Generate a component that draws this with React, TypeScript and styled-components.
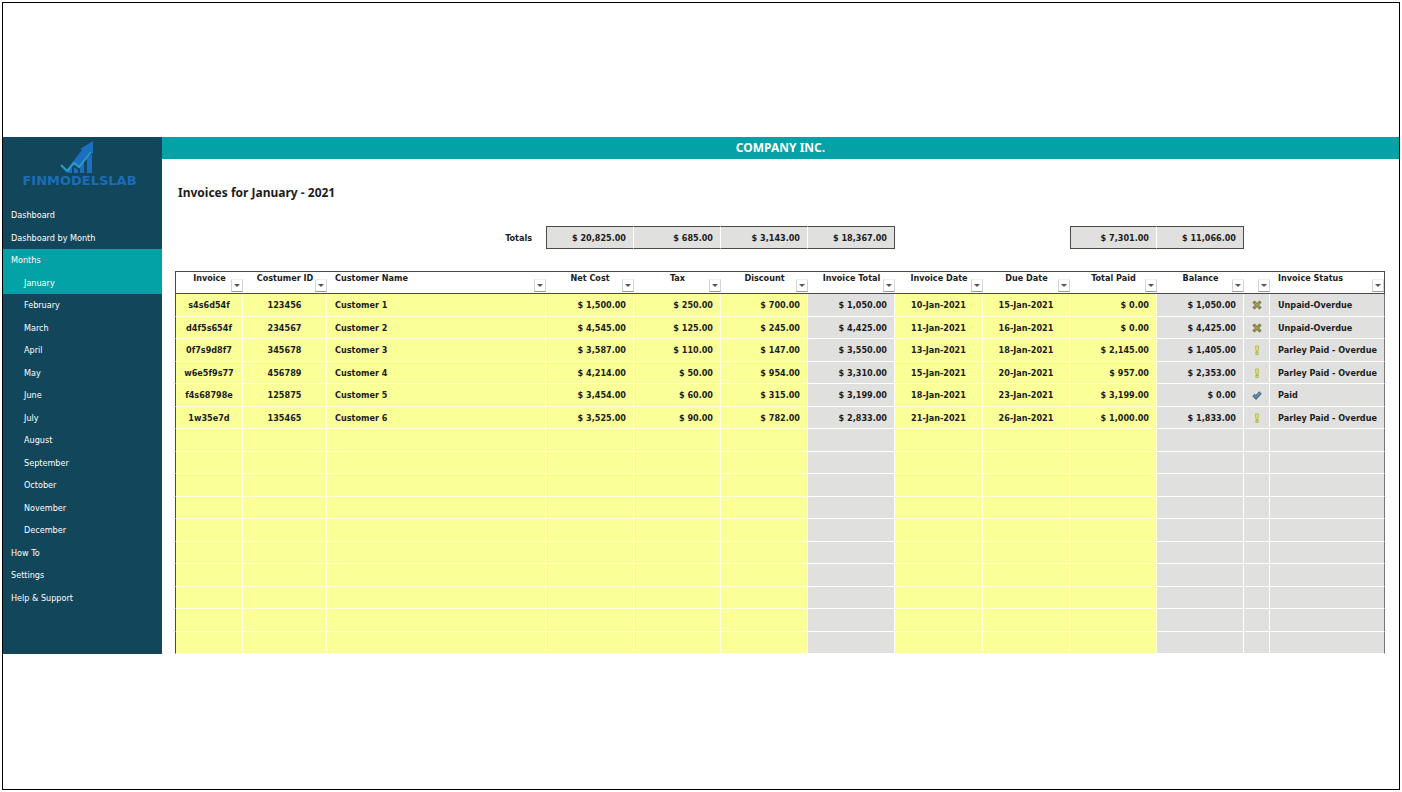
import React from "react";
import styled, { createGlobalStyle, css } from "styled-components";

const teal = "#02a2a6";
const navy = "#12465a";
const yellow = "#faff98";
const grey = "#e0e0df";
const line = "#4a4a4a";
const headingFont = `"Noto Sans", "Open Sans", sans-serif`;

const GlobalStyle = createGlobalStyle`
  *, *::before, *::after { box-sizing: border-box; }
  body {
    margin: 0;
    background: #fff;
    color: #1c1c1c;
    font-family: "DejaVu Sans Condensed", "DejaVu Sans", sans-serif;
    font-size: 9px;
    line-height: 12px;
  }
`;

const Page = styled.div`
  min-height: 100vh;
  padding: 2px;
  display: flex;
`;

const Frame = styled.div`
  flex: 1;
  min-width: 0;
  border: 1px solid #000;
  display: flex;
  align-items: center;
`;

const Workbook = styled.div`
  flex: 1;
  min-width: 0;
  padding-bottom: 1px;
  display: flex;
  align-items: stretch;
`;

const Sidebar = styled.aside`
  flex: none;
  width: 159px;
  padding-bottom: 45px;
  background: ${navy};
  color: #fff;
`;

const Brand = styled.div`
  height: 67px;
  padding: 4px 6px 0 0;
  display: flex;
  flex-direction: column;
  align-items: center;
  color: #1b6db9;
`;

const BrandMark = styled.svg`
  display: block;
  width: 40px;
  height: 32px;
`;

const BrandName = styled.span`
  font-family: "DejaVu Sans", sans-serif;
  font-size: 13px;
  line-height: 16px;
  font-weight: 700;
`;

const NavList = styled.ul`
  margin: 0;
  padding: 0;
  list-style: none;
`;

const NavItem = styled.li<{ $active?: boolean }>`
  height: 22px;
  background: ${(p) => (p.$active ? teal : "transparent")};
  &:nth-child(even) { height: 23px; }
`;

const NavLink = styled.a<{ $nested?: boolean }>`
  height: 100%;
  display: flex;
  align-items: center;
  padding-left: ${(p) => (p.$nested ? 21 : 8)}px;
  color: inherit;
  text-decoration: none;
`;

const Main = styled.main`
  flex: 1;
  min-width: 0;
`;

const CompanyBar = styled.header`
  height: 22px;
  display: flex;
  align-items: center;
  justify-content: center;
  background: ${teal};
  color: #fff;
  font-family: ${headingFont};
  font-size: 12px;
  font-weight: 700;
`;

const Content = styled.div`
  padding: 26px 14px 0 13px;
`;

const Title = styled.h1`
  margin: 0 0 25px;
  padding-left: 3px;
  font-family: ${headingFont};
  font-size: 12px;
  line-height: 16px;
  font-weight: 700;
`;

const Grid = styled.table`
  width: 100%;
  table-layout: fixed;
  border-collapse: separate;
  border-spacing: 0;
  font-weight: 700;
`;

const TotalsGrid = styled(Grid)`
  margin-bottom: 22px;
`;

const TotalsLabel = styled.th`
  height: 23px;
  padding: 0 14px 0 0;
  text-align: right;
`;

const Total = styled.td<{ $first?: boolean; $last?: boolean }>`
  height: 23px;
  padding: 0 7px 0 0;
  text-align: right;
  background: ${grey};
  border-top: 1px solid ${line};
  border-bottom: 1px solid ${line};
  border-right: 1px solid ${(p) => (p.$last ? line : "#fff")};
  ${(p) => p.$first && css`border-left: 1px solid ${line};`}
`;

const Blank = styled.td`
  padding: 0;
`;

type Align = "left" | "center" | "right";

const Head = styled.th<{ $align: Align }>`
  position: relative;
  height: 23px;
  padding: 0 ${(p) => (p.$align === "left" ? 8 : 0)}px;
  vertical-align: top;
  text-align: ${(p) => p.$align};
  white-space: nowrap;
  border-top: 1px solid ${line};
  border-bottom: 1px solid ${line};
  &:first-child { border-left: 1px solid ${line}; }
  &:last-child { border-right: 1px solid ${line}; }
`;

const FilterButton = styled.button`
  position: absolute;
  right: 0;
  bottom: 1px;
  width: 12px;
  height: 13px;
  padding: 0;
  display: flex;
  align-items: center;
  justify-content: center;
  background: #fff;
  border: 1px solid #d4d4d8;
  border-top-color: #f0f0f0;
  border-bottom-color: #9a9aa4;
  &::after {
    content: "";
    border: 3px solid transparent;
    border-top-color: #555;
    border-bottom-width: 0;
  }
`;

const Row = styled.tr`
  height: 22px;
  &:nth-child(odd) { height: 23px; }
`;

const Cell = styled.td<{ $align: Align; $locked?: boolean }>`
  padding: 0 ${(p) => (p.$align === "center" ? 0 : p.$align === "left" ? 8 : 7)}px;
  text-align: ${(p) => p.$align};
  white-space: nowrap;
  background: ${(p) => (p.$locked ? grey : yellow)};
  border-right: 1px solid ${(p) => (p.$locked ? "#fff" : "#fdffdc")};
  border-bottom: 1px solid ${(p) => (p.$locked ? "#fff" : "#fdffdc")};
  &:first-child { border-left: 1px solid ${line}; }
  &:last-child { border-right: 1px solid #777; }
`;

const StatusIcon = styled.svg`
  display: block;
  margin: 0 auto;
  width: 10px;
  height: 10px;
`;

type Column = { label: string; width?: number; head: Align; body: Align; locked?: boolean };

const columns: Column[] = [
  { label: "Invoice", width: 68, head: "center", body: "center" },
  { label: "Costumer ID", width: 84, head: "center", body: "center" },
  { label: "Customer Name", head: "left", body: "left" },
  { label: "Net Cost", width: 88, head: "center", body: "right" },
  { label: "Tax", width: 87, head: "center", body: "right" },
  { label: "Discount", width: 87, head: "center", body: "right" },
  { label: "Invoice Total", width: 87, head: "center", body: "right", locked: true },
  { label: "Invoice Date", width: 88, head: "center", body: "center" },
  { label: "Due Date", width: 87, head: "center", body: "center" },
  { label: "Total Paid", width: 87, head: "center", body: "right" },
  { label: "Balance", width: 87, head: "center", body: "right", locked: true },
  { label: "", width: 26, head: "center", body: "center", locked: true },
  { label: "Invoice Status", width: 115, head: "left", body: "left", locked: true },
];

type Mark = "cross" | "bang" | "check";

const invoices: { cells: string[]; mark: Mark; status: string }[] = [
  { cells: ["s4s6d54f", "123456", "Customer 1", "$ 1,500.00", "$ 250.00", "$ 700.00", "$ 1,050.00", "10-Jan-2021", "15-Jan-2021", "$ 0.00", "$ 1,050.00"], mark: "cross", status: "Unpaid-Overdue" },
  { cells: ["d4f5s654f", "234567", "Customer 2", "$ 4,545.00", "$ 125.00", "$ 245.00", "$ 4,425.00", "11-Jan-2021", "16-Jan-2021", "$ 0.00", "$ 4,425.00"], mark: "cross", status: "Unpaid-Overdue" },
  { cells: ["0f7s9d8f7", "345678", "Customer 3", "$ 3,587.00", "$ 110.00", "$ 147.00", "$ 3,550.00", "13-Jan-2021", "18-Jan-2021", "$ 2,145.00", "$ 1,405.00"], mark: "bang", status: "Parley Paid - Overdue" },
  { cells: ["w6e5f9s77", "456789", "Customer 4", "$ 4,214.00", "$ 50.00", "$ 954.00", "$ 3,310.00", "15-Jan-2021", "20-Jan-2021", "$ 957.00", "$ 2,353.00"], mark: "bang", status: "Parley Paid - Overdue" },
  { cells: ["f4s68798e", "125875", "Customer 5", "$ 3,454.00", "$ 60.00", "$ 315.00", "$ 3,199.00", "18-Jan-2021", "23-Jan-2021", "$ 3,199.00", "$ 0.00"], mark: "check", status: "Paid" },
  { cells: ["1w35e7d", "135465", "Customer 6", "$ 3,525.00", "$ 90.00", "$ 782.00", "$ 2,833.00", "21-Jan-2021", "26-Jan-2021", "$ 1,000.00", "$ 1,833.00"], mark: "bang", status: "Parley Paid - Overdue" },
];

const emptyRows = Array.from({ length: 10 }, (_, i) => i);

const months = ["January", "February", "March", "April", "May", "June", "July", "August", "September", "October", "November", "December"];

const navigation = [
  { label: "Dashboard" },
  { label: "Dashboard by Month" },
  { label: "Months", active: true },
  ...months.map((label) => ({ label, nested: true, active: label === "January" })),
  { label: "How To" },
  { label: "Settings" },
  { label: "Help & Support" },
] as { label: string; nested?: boolean; active?: boolean }[];

function Columns() {
  return (
    <colgroup>
      {columns.map((c, i) => (
        <col key={i} width={c.width} />
      ))}
    </colgroup>
  );
}

function Logo() {
  return (
    <BrandMark viewBox="0 0 40 32" aria-hidden="true">
      <g fill="#1b6fbe">
        <path d="M8 29l4-3v6H8zM14 26l4 3v3h-4zM20 24l4-4v12h-4zM27 17l5-4v19h-5z" />
        <path d="M8 27 22 9l-2-1L33 0v13l-3-2-11 14-5-4z" />
      </g>
      <path d="m1 24 6 6 7-8 5 4 12-15" fill="none" stroke="#2d9bd2" strokeWidth="2" />
    </BrandMark>
  );
}

function StatusMark({ mark }: { mark: Mark }) {
  if (mark === "cross") {
    return (
      <StatusIcon viewBox="0 0 10 10" role="img" aria-label="Unpaid">
        <path d="M2.500 2.500l5 5M7.500 2.500l-5 5" stroke="#77743a" strokeWidth="3" strokeLinecap="square" />
        <path d="M2.500 2.500l5 5M7.500 2.500l-5 5" stroke="#a3a062" strokeWidth="1.400" />
      </StatusIcon>
    );
  }
  if (mark === "bang") {
    return (
      <StatusIcon viewBox="0 0 10 10" role="img" aria-label="Partly paid">
        <path d="M3.500 1h3L6 6.400H4z" fill="#e4e86a" stroke="#a9ab55" strokeWidth=".8" />
        <rect x="3.900" y="7.400" width="2.200" height="2" fill="#e4e86a" stroke="#a9ab55" strokeWidth=".8" />
      </StatusIcon>
    );
  }
  return (
    <StatusIcon viewBox="0 0 10 10" role="img" aria-label="Paid">
      <path d="M1.500 5 4 7.500l4.500-5" fill="none" stroke="#4a6f88" strokeWidth="3.400" />
      <path d="M1.800 5.200 4 7.300l4-4.500" fill="none" stroke="#7ba6bd" strokeWidth="1" />
    </StatusIcon>
  );
}

export default function App() {
  return (
    <>
      <GlobalStyle />
      <Page>
        <Frame>
          <Workbook>
            <Sidebar>
              <Brand>
                <Logo />
                <BrandName>FINMODELSLAB</BrandName>
              </Brand>
              <nav aria-label="Sheets">
                <NavList>
                  {navigation.map((item) => (
                    <NavItem key={item.label} $active={item.active}>
                      <NavLink href="#" $nested={item.nested}>{item.label}</NavLink>
                    </NavItem>
                  ))}
                </NavList>
              </nav>
            </Sidebar>
            <Main>
              <CompanyBar>COMPANY INC.</CompanyBar>
              <Content>
                <Title>Invoices for January - 2021</Title>
                <TotalsGrid>
                  <Columns />
                  <tbody>
                    <tr>
                      <TotalsLabel colSpan={3} scope="row">Totals</TotalsLabel>
                      <Total $first>$ 20,825.00</Total>
                      <Total>$ 685.00</Total>
                      <Total>$ 3,143.00</Total>
                      <Total $last>$ 18,367.00</Total>
                      <Blank colSpan={2} />
                      <Total $first>$ 7,301.00</Total>
                      <Total $last>$ 11,066.00</Total>
                      <Blank colSpan={2} />
                    </tr>
                  </tbody>
                </TotalsGrid>
                <Grid>
                  <Columns />
                  <thead>
                    <tr>
                      {columns.map((c, i) => (
                        <Head key={i} $align={c.head} scope="col">
                          {c.label}
                          <FilterButton type="button" aria-label={`Filter ${c.label || "status icon"}`} />
                        </Head>
                      ))}
                    </tr>
                  </thead>
                  <tbody>
                    {invoices.map((inv) => (
                      <Row key={inv.cells[0]}>
                        {inv.cells.map((value, i) => (
                          <Cell key={i} $align={columns[i].body} $locked={columns[i].locked}>{value}</Cell>
                        ))}
                        <Cell $align="center" $locked><StatusMark mark={inv.mark} /></Cell>
                        <Cell $align="left" $locked>{inv.status}</Cell>
                      </Row>
                    ))}
                    {emptyRows.map((n) => (
                      <Row key={n}>
                        {columns.map((c, i) => (
                          <Cell key={i} $align={c.body} $locked={c.locked} />
                        ))}
                      </Row>
                    ))}
                  </tbody>
                </Grid>
              </Content>
            </Main>
          </Workbook>
        </Frame>
      </Page>
    </>
  );
}
